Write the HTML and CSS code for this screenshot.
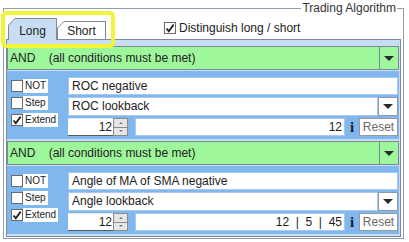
FILE: index.html
```html
<!DOCTYPE html>
<html lang="en">
  <head>
    <meta charset="UTF-8" />
    <title>Trading Algorithm</title>
    <link rel="stylesheet" href="styles.css">
  </head>
  <body>
    <!-- annotation box drawn over the tabs -->
    <div class="highlight"></div>

    <fieldset class="algo">
      <legend>Trading Algorithm</legend>

      <div class="top-row">
        <div class="tabs">
          <div class="tab active"><span>Long</span></div>
          <div class="tab"><span>Short</span></div>
        </div>
        <label class="distinguish">
          <span class="box checked">
            <svg viewBox="0 0 10 10" width="10" height="10"><path d="M1.5 5.5 L3.8 8.2 L8.6 1.6" fill="none" stroke="#222" stroke-width="1.8"/></svg>
          </span>
          Distinguish long / short
        </label>
      </div>

      <div class="tab-panel">
        <div class="combo">
          <div class="value">AND    (all conditions must be met)</div>
          <div class="arrow"></div>
        </div>

        <div class="cond">
          <div class="flags">
            <div class="flag"><span class="box"></span><span class="text">NOT</span></div>
            <div class="flag"><span class="box"></span><span class="text">Step</span></div>
            <div class="flag">
              <span class="box checked">
                <svg viewBox="0 0 10 10" width="10" height="10"><path d="M1.5 5.5 L3.8 8.2 L8.6 1.6" fill="none" stroke="#222" stroke-width="1.8"/></svg>
              </span>
              <span class="text">Extend</span>
            </div>
          </div>
          <div class="fields">
            <div class="text-field">ROC negative</div>
            <div class="select">
              <div class="value">ROC lookback</div>
              <div class="arrow"></div>
            </div>
            <div class="param-row">
              <div class="spinner">
                <div class="num">12</div>
                <div class="btns"><span class="up"></span><span class="down"></span></div>
              </div>
              <div class="value-field">12</div>
              <div class="info">i</div>
              <button class="reset">Reset</button>
            </div>
          </div>
        </div>

        <div class="combo second">
          <div class="value">AND    (all conditions must be met)</div>
          <div class="arrow"></div>
        </div>

        <div class="cond">
          <div class="flags">
            <div class="flag"><span class="box"></span><span class="text">NOT</span></div>
            <div class="flag"><span class="box"></span><span class="text">Step</span></div>
            <div class="flag">
              <span class="box checked">
                <svg viewBox="0 0 10 10" width="10" height="10"><path d="M1.5 5.5 L3.8 8.2 L8.6 1.6" fill="none" stroke="#222" stroke-width="1.8"/></svg>
              </span>
              <span class="text">Extend</span>
            </div>
          </div>
          <div class="fields">
            <div class="text-field">Angle of MA of SMA negative</div>
            <div class="select">
              <div class="value">Angle lookback</div>
              <div class="arrow"></div>
            </div>
            <div class="param-row">
              <div class="spinner">
                <div class="num">12</div>
                <div class="btns"><span class="up"></span><span class="down"></span></div>
              </div>
              <div class="value-field">12  |  5  |  45</div>
              <div class="info">i</div>
              <button class="reset">Reset</button>
            </div>
          </div>
        </div>
      </div>
    </fieldset>
  </body>
</html>
```

FILE: styles.css
```css
* {
  box-sizing: border-box;
}

body {
  margin: 0;
  padding: 1px 0 0 3px;
  background: #fff;
  font-family: "Liberation Sans", Arial, sans-serif;
  font-size: 12px;
  color: #222;
}

/* yellow annotation around the tabs */
.highlight {
  position: absolute;
  left: 1px;
  top: 11px;
  width: 114px;
  height: 37px;
  border: 4px solid #f3f337;
  border-radius: 5px;
  z-index: 5;
}

/* outer titled border */
.algo {
  width: 401px;
  margin: 0;
  padding: 0 2px 1px;
  border: 1px solid #8e9cab;
  min-width: 0;
}

.algo legend {
  margin-left: auto;
  margin-right: 4px;
  padding: 0 1px;
  font-size: 12px;
  line-height: 14px;
  color: #333;
}

.top-row {
  display: flex;
  align-items: flex-end;
  height: 24px;
  padding-left: 2px;
}

.tabs {
  display: flex;
  align-items: flex-end;
  position: relative;
  z-index: 2;
  margin-bottom: -1px;
}

.tab {
  width: 49px;
  height: 19px;
  padding: 1px 1px 1px 1px;
  background: #7d8a98;
  clip-path: polygon(0 7px, 7px 0, 100% 0, 100% 100%, 0 100%);
}

.tab span {
  display: flex;
  align-items: center;
  justify-content: center;
  height: 100%;
  background: #fff;
  clip-path: polygon(0 6px, 6px 0, 100% 0, 100% 100%, 0 100%);
  padding-top: 1px;
}

.tab.active {
  height: 22px;
  padding-bottom: 0;
}

.tab.active span {
  background: #c8ddf2;
  padding-top: 3px;
}

.distinguish {
  display: flex;
  align-items: center;
  gap: 3px;
  margin-left: 58px;
  margin-bottom: 4px;
  font-size: 12px;
}

.box {
  display: inline-flex;
  align-items: center;
  justify-content: center;
  width: 12px;
  height: 12px;
  background: #fff;
  border: 1px solid #6b6b6b;
  flex-shrink: 0;
}

/* tab content */
.tab-panel {
  border: 1px solid #7d8a98;
  background: #c8ddf2;
  padding: 6px 1px 2px 0;
}

.combo {
  display: flex;
  height: 24px;
  border: 1px solid #7d8a98;
  background: #9ef79b;
}

.combo.second {
  margin-top: 2px;
}

.combo .value {
  flex: 1;
  padding-left: 2px;
  line-height: 22px;
  white-space: pre;
}

.arrow {
  width: 19px;
  border-left: 1px solid #7d8a98;
  display: flex;
  align-items: center;
  justify-content: center;
}

.arrow::before {
  content: "";
  border-left: 5px solid transparent;
  border-right: 5px solid transparent;
  border-top: 5px solid #2a2a2a;
}

.cond {
  display: flex;
  margin-top: 1px;
  padding: 6px 1px 3px 4px;
  background: #80b7ef;
}

.flags {
  width: 57px;
  display: flex;
  flex-direction: column;
}

.flag {
  height: 17px;
  display: flex;
  align-items: center;
}

.flag .text {
  background: #fff;
  font-size: 10px;
  line-height: 14px;
  padding: 0 2px 0 2px;
}

.fields {
  flex: 1;
  display: flex;
  flex-direction: column;
  gap: 2px;
}

.text-field {
  height: 18px;
  background: #fff;
  border: 1px solid #a9c8ec;
  padding: 0 3px;
  line-height: 16px;
}

.select {
  height: 19px;
  display: flex;
}

.select .value {
  flex: 1;
  background: #fff;
  border: 1px solid #a9c8ec;
  padding: 0 3px;
  line-height: 17px;
}

.select .arrow {
  width: 20px;
  background: #fff;
  border: 1px solid #8e9aa8;
}

.param-row {
  display: flex;
  height: 18px;
}

.spinner {
  display: flex;
  width: 60px;
}

.spinner .num {
  width: 45px;
  background: #fff;
  border-top: 1px solid #dfe9f5;
  border-bottom: 1px solid #5a5a5a;
  text-align: right;
  padding-right: 1px;
  line-height: 16px;
}

.btns {
  width: 15px;
  display: flex;
  flex-direction: column;
  border: 1px solid #8c8c8c;
  background: #8c8c8c;
  gap: 1px;
}

.btns span {
  flex: 1;
  background: #e6e6e6;
  display: flex;
  align-items: center;
  justify-content: center;
}

.btns .up::before {
  content: "";
  border-left: 2px solid transparent;
  border-right: 2px solid transparent;
  border-bottom: 2px solid #777;
}

.btns .down::before {
  content: "";
  border-left: 2px solid transparent;
  border-right: 2px solid transparent;
  border-top: 2px solid #777;
}

.value-field {
  flex: 1;
  margin-left: 7px;
  background: #fff;
  border: 1px solid #a9c8ec;
  text-align: right;
  padding-right: 2px;
  line-height: 16px;
  white-space: pre;
}

.info {
  width: 14px;
  text-align: center;
  font-family: "Liberation Serif", serif;
  font-weight: bold;
  font-size: 15px;
  line-height: 18px;
  color: #1c1c2c;
}

.reset {
  width: 39px;
  margin: 0;
  padding: 0;
  border: 1px solid #9a9a9a;
  background: #fff;
  color: #6a6a6a;
  font-family: "Liberation Sans", Arial, sans-serif;
  font-size: 12px;
}
```
